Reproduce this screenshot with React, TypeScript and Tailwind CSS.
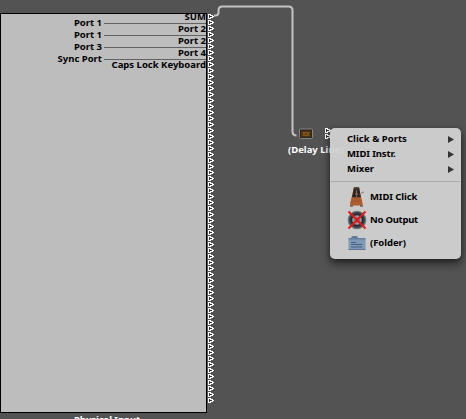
import React from "react";

const inputs = ["Port 1", "Port 1", "Port 3", "Sync Port"];
const outputs = ["SUM", "Port 2", "Port 2", "Port 4", "Caps Lock Keyboard"];

function Pin() {
  return (
    <svg className="block h-[6px] w-[6px] shrink-0" viewBox="0 0 6 6" shapeRendering="crispEdges">
      <path d="M0 0h3v1h-3zM0 1h1v3h-1zM2 1h3v1h-3zM4 2h2v1h-2zM2 3h3v1h-3zM0 4h3v1h-3z" fill="#fff" />
      <path d="M1 1h1v3h-1zM2 2h2v1h-2z" fill="#333" />
    </svg>
  );
}

function Pins({ count }: { count: number }) {
  return (
    <div className="flex flex-col">
      {Array.from({ length: count }, (_, i) => (
        <Pin key={i} />
      ))}
    </div>
  );
}

function Metronome() {
  return (
    <svg className="h-[20px] w-[18px]" viewBox="0 0 18 20">
      <path d="M6 .5h5l3.5 16.5H2z" fill="#a4572f" />
      <path d="M6 .5h5l2 10H4z" fill="#30241f" />
      <path d="M6 .5h5l.5 2h-6z" fill="#4b382f" />
      <path d="M8.5 3v7" stroke="#8a8072" strokeWidth=".8" />
      <path d="M7.2 6h2.6v2H7.2z" fill="#716657" />
      <path d="M11.5 7.5l3-2" stroke="#a08a78" strokeWidth=".8" />
      <path d="M13.5 5.5l2-1.2v2z" fill="#9b623e" />
      <path d="M4 10.5h9l1.8 8H2z" fill="#b05c2f" />
      <path d="M3.5 14h10" stroke="#9a4d29" strokeWidth=".6" />
      <path d="M2 18.5h3v1H2zM12 18.5h3v1h-3z" fill="#55301f" />
    </svg>
  );
}

function NoOutput() {
  return (
    <svg className="h-[20px] w-[20px]" viewBox="0 0 20 20">
      <circle cx="10" cy="10" r="9.3" fill="#707c80" />
      <circle cx="10" cy="10" r="8.2" fill="#3a474c" />
      <circle cx="10" cy="10" r="6.5" fill="#202b2f" />
      <circle cx="10" cy="10" r="4.8" fill="#8e9ca1" />
      <circle cx="10" cy="10" r="2.5" fill="#5f7078" />
      <path d="M1.5 1.5l17 17M18.5 1.5L1.5 18.5" stroke="#f01014" strokeWidth="1.9" />
    </svg>
  );
}

function Folder() {
  return (
    <svg className="h-[16px] w-[18px]" viewBox="0 0 18 16">
      <path d="M3 3.5L3.6 1.6 4.5 1h4l1 .6.5 1.9z" fill="#5f7b99" />
      <path d="M.5 3h17v12H.5z" fill="#7f9ab6" />
      <path d="M.5 3h17v1.5H.5z" fill="#6682a0" />
      <path d="M.5 14h17v1H.5z" fill="#5e7894" />
      <path d="M3 7.5h5M3 9.5h11M3 12h11" stroke="#48617d" strokeWidth="1" />
    </svg>
  );
}

const submenus = [
  { name: "Click & Ports", spacing: "tracking-[0.02px]" },
  { name: "MIDI Instr.", spacing: "tracking-[-0.12px]" },
  { name: "Mixer", spacing: "tracking-[0.02px]" },
];
const objects = [
  { name: "MIDI Click", icon: <Metronome />, spacing: "tracking-[-0.1px]" },
  { name: "No Output", icon: <NoOutput />, spacing: "tracking-[-0.25px]" },
  { name: "(Folder)", icon: <Folder />, spacing: "tracking-[-0.05px]" },
];

export default function App() {
  return (
    <main className="relative h-[419px] w-[466px] overflow-hidden bg-[#535353] font-['Noto_Sans',sans-serif] text-[9.5px] font-bold whitespace-nowrap text-black">
      <section className="absolute top-[13px] left-0 flex">
        <div>
          <div className="flex h-[400px] w-[207px] justify-between border border-black bg-[#bdbdbd]">
            <div className="flex w-[101px] flex-col items-end pt-[3px]">
              {inputs.map((name, i) => (
                <span key={i} className="h-[12px] leading-[12px]">{name}</span>
              ))}
            </div>
            <div className="-mt-[2px] flex w-[102px] flex-col items-end">
              {outputs.map((name, i) => (
                <div key={i} className={`flex h-[12px] w-full justify-end leading-[10px] ${i < 4 ? "border-b border-[#626262]" : ""}`}>
                  <span>{name}</span>
                </div>
              ))}
            </div>
          </div>
          <div className="h-[14px] pl-[74px] text-[9.5px] leading-[14px] tracking-[-0.08px] text-white">Physical Input</div>
        </div>
        <div className="pt-px pl-px"><Pins count={65} /></div>
      </section>

      <svg className="absolute top-0 left-0" width="300" height="140" fill="none">
        <path d="M214 15.5h1.5q3 0 3-3v-2q0-4 4-4h66q4 0 4 4v121q0 4 4 4" stroke="#c3c3c3" strokeWidth="2" />
      </svg>

      <section className="absolute top-[128px] left-[288px]">
        <div className="flex w-[43px] justify-between pl-[10px]">
          <svg className="h-[12px] w-[15px]" viewBox="0 0 15 12">
            <rect x="1.5" y="1" width="13" height="9.5" rx="1" fill="#30251d" stroke="#858585" />
            <path d="M3 3h10v6H3z" fill="#4a3215" />
            <path d="M4 4l2.5.6L8 3.6l1.5 1L12 4l-1.5 2L12 8l-2.5-.6L8 8.4l-1.5-1L4 8l1.5-2z" fill="#8d5c14" />
            <path d="M7 5.5h2v1H7z" fill="#2b1d0e" />
          </svg>
          <Pins count={2} />
        </div>
        <div className="mt-[3px] text-[9.5px] leading-[14px] text-white">(Delay Line)</div>
      </section>

      <nav className="absolute top-[128px] left-[330px] h-[131px] w-[131px] rounded-[5px] bg-[#d2d2d2f2] pt-[4px] shadow-[0_5px_9px_rgba(0,0,0,0.5),0_1px_5px_rgba(0,0,0,0.3)]">
        {submenus.map((m) => (
          <div key={m.name} className="flex h-[15px] items-center justify-between pr-[7px] pl-[17px]">
            <span className={m.spacing}>{m.name}</span>
            <svg className="h-[7px] w-[6px]" viewBox="0 0 6 7"><path d="M0 0l6 3.5L0 7z" fill="#333" /></svg>
          </div>
        ))}
        <div className="mx-px mt-[4px] mb-[3px] h-px bg-[#aaa]" />
        {objects.map((o) => (
          <div key={o.name} className="flex h-[23px] items-center pl-[17px]">
            <span className="flex w-[20px] justify-center">{o.icon}</span>
            <span className={`mt-[2px] ml-[3px] ${o.spacing}`}>{o.name}</span>
          </div>
        ))}
      </nav>
    </main>
  );
}
